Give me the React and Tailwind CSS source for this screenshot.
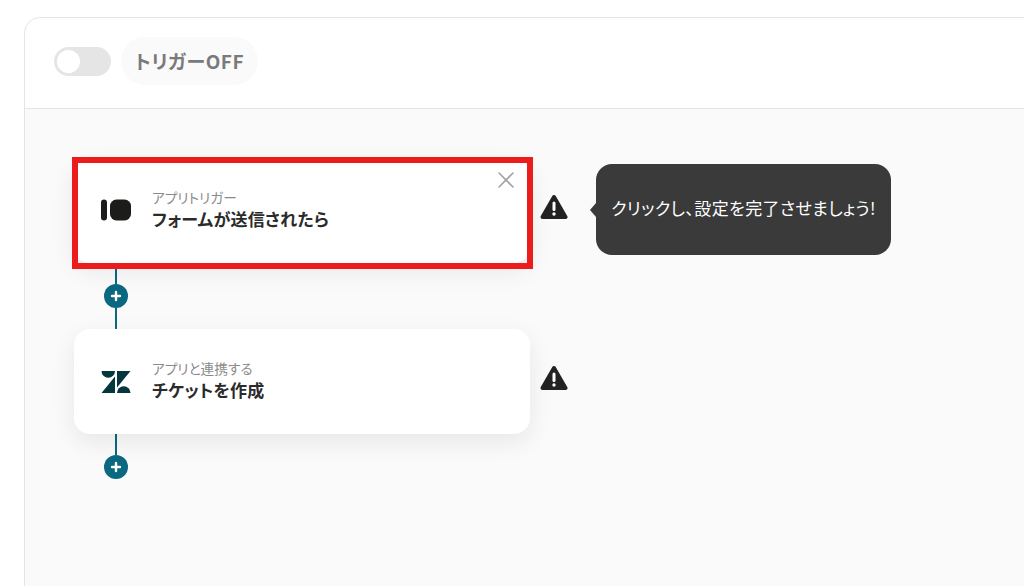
import React from 'react';
import { X } from 'lucide-react';

function TypeformLogo() {
  return (
    <svg width="30" height="22" viewBox="0 0 30 22" fill="#1c1c1a" className="mb-[2px]">
      <rect x="0" y="0.5" width="6" height="21" rx="3" />
      <rect x="9" y="0.5" width="21" height="21" rx="6.5" />
    </svg>
  );
}

function ZendeskLogo() {
  return (
    <svg width="30" height="22" viewBox="0 0 29 22" fill="#03363d">
      <path d="M0 0h13.5a6.75 6.75 0 0 1-13.5 0z" />
      <path d="M13.5 5.5V22H0z" />
      <path d="M15.5 0H29L15.5 16.5z" />
      <path d="M15.5 22a6.75 6.75 0 0 1 13.5 0z" />
    </svg>
  );
}

function WarningIcon() {
  return (
    <svg width="28" height="26" viewBox="0 0 28 26" className="mb-[7px] shrink-0">
      <path d="M14 3 L25.5 23 H2.5 Z" fill="#222222" stroke="#222222" strokeWidth="4" strokeLinejoin="round" />
      <rect x="12.5" y="7.5" width="3" height="9.5" rx="1.5" fill="#ffffff" />
      <circle cx="14" cy="20" r="1.7" fill="#ffffff" />
    </svg>
  );
}

function Connector({ tail }) {
  return (
    <div className="ml-[30px] flex w-6 flex-col items-center">
      <div className="h-[21px] w-[2px] bg-[#0a6880]" />
      <button className="flex h-6 w-6 items-center justify-center rounded-full bg-[#0a6880]">
        <svg width="12" height="12" viewBox="0 0 12 12" stroke="#ffffff" strokeWidth="2.4" strokeLinecap="round">
          <path d="M6 2v8M2 6h8" />
        </svg>
      </button>
      {tail && <div className="h-[21px] w-[2px] bg-[#0a6880]" />}
    </div>
  );
}

function StepCard({ logo, label, title, children }) {
  return (
    <div className="relative flex items-center gap-[10px]">
      <div className="relative flex h-[105px] w-[456px] items-center gap-[21px] rounded-2xl bg-white pl-[27px] shadow-[0_8px_24px_rgba(0,0,0,0.08)]">
        {logo}
        <div className="mb-[2px] flex flex-col">
          <span className="text-[13.7px] leading-[18px] font-normal text-[#8a8a8a]">{label}</span>
          <span className="text-[17px] leading-[26px] font-semibold tracking-[0.2px] text-[#2b2b2b]">{title}</span>
        </div>
        {children}
      </div>
      <WarningIcon />
    </div>
  );
}

export default function App() {
  return (
    <div className="h-[586px] w-[1024px] overflow-hidden bg-white pt-[17px] pl-6 font-['Noto_Sans_CJK_JP','Noto_Sans',sans-serif] [font-feature-settings:'palt']">
      <div className="h-[700px] w-[1100px] rounded-t-2xl border border-[#e5e5e5]">
        <div className="flex h-[91px] items-start gap-[10px] border-b border-[#e5e5e5] pt-[19px] pl-[29px]">
          <div className="mt-[10px] flex h-[29px] w-[57px] items-center rounded-full bg-[#e5e5e5] pl-[3px]">
            <div className="h-[23px] w-[23px] rounded-full bg-white" />
          </div>
          <div className="flex h-12 w-[137px] items-center justify-center rounded-full bg-[#fafafa] text-[19px] font-semibold tracking-[0.55px] text-[#7a7a7a]">
            トリガーOFF
          </div>
        </div>

        <div className="h-full bg-[#fafafa] pt-[49px] pl-[49px]">
          <div className="relative">
            <StepCard logo={<TypeformLogo />} label="アプリトリガー" title="フォームが送信されたら">
              <X className="absolute top-[8px] right-[10px] h-7 w-7 text-[#a3a3a3]" strokeWidth={1.4} />
            </StepCard>
            <div className="absolute top-[6px] left-[522px] flex h-[91px] w-[295px] items-center justify-center rounded-2xl bg-[#3a3a3a] pb-[3px] text-[17px] font-normal tracking-[0.4px] text-white">
              <span className="absolute top-[39px] -left-[6px] h-0 w-0 border-y-[7px] border-r-[6px] border-y-transparent border-r-[#3a3a3a]" />
              クリックし、設定を完了させましょう!
            </div>
            <div className="pointer-events-none absolute -top-[1px] -left-[2px] h-[112px] w-[461px] border-[6px] border-[#ec1c1c]" />
          </div>
          <Connector tail />
          <StepCard logo={<ZendeskLogo />} label="アプリと連携する" title="チケットを作成" />
          <Connector />
        </div>
      </div>
    </div>
  );
}
